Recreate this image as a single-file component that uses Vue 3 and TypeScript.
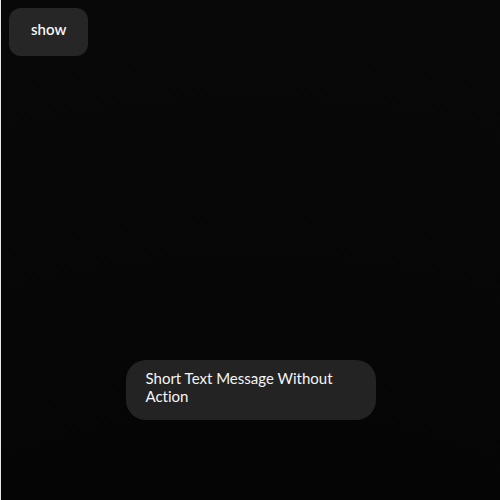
<script setup lang="ts">
import { ref } from 'vue'

const message = ref<string>('Short Text Message Without Action')
const visible = ref<boolean>(true)

function show(): void {
  visible.value = true
}
</script>

<template>
  <main class="page">
    <button type="button" class="trigger" @click="show">show</button>
    <div v-if="visible" class="toast" role="status">{{ message }}</div>
  </main>
</template>

<style>
body {
  margin: 0;
}
</style>

<style scoped>
.page {
  box-sizing: border-box;
  min-height: 100vh;
  display: flex;
  flex-direction: column;
  justify-content: space-between;
  align-items: flex-start;
  padding: 8px 8px 80px;
  border-left: 1px solid #e4e8e8;
  background: radial-gradient(circle 1100px at 50% 1100px, #010101, #080808);
  color: #f5f5f5;
  font-family: Lato, 'Noto Sans', sans-serif;
  font-size: 15px;
  font-variant-ligatures: none;
  line-height: 18px;
}

.trigger {
  height: 48px;
  padding: 0 22px 6px;
  border: 0;
  border-radius: 12px;
  background: #262626;
  color: inherit;
  font: inherit;
  font-weight: 600;
  cursor: pointer;
}

.toast {
  box-sizing: border-box;
  width: 250px;
  max-width: 100%;
  align-self: center;
  padding: 9px 20px 15px;
  border-radius: 20px;
  background: #232323;
}
</style>
